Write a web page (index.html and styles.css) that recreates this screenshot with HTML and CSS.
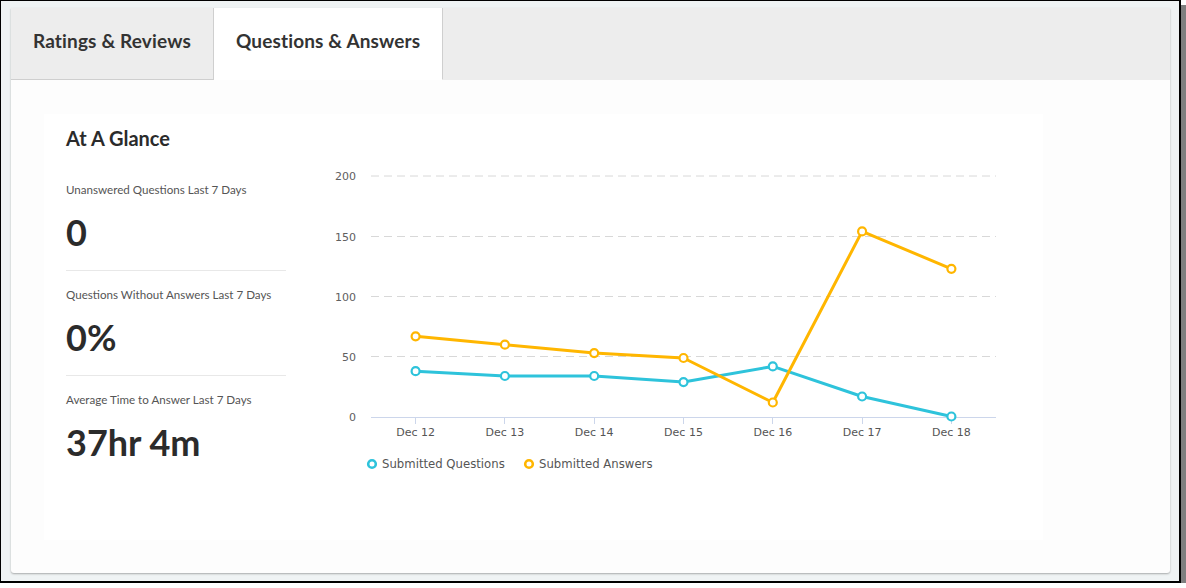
FILE: index.html
```html
<!DOCTYPE html>
<html>
<head>
<meta charset="utf-8">
<link rel="stylesheet" href="styles.css">
</head>
<body>
<div class="frame">
  <div class="panel">
    <div class="tabs">
      <div class="tab">Ratings &amp; Reviews</div>
      <div class="tab active">Questions &amp; Answers</div>
    </div>
    <div class="content">
      <div class="card">
        <div class="stats">
          <h2 class="title">At A Glance</h2>
          <div class="stat first">
            <div class="label">Unanswered Questions Last 7 Days</div>
            <div class="value">0</div>
          </div>
          <div class="stat">
            <div class="label">Questions Without Answers Last 7 Days</div>
            <div class="value">0%</div>
          </div>
          <div class="stat">
            <div class="label">Average Time to Answer Last 7 Days</div>
            <div class="value">37hr 4m</div>
          </div>
        </div>
        <svg class="chart" width="700" height="320" viewBox="0 0 700 320">
          <g class="grid">
            <line x1="51" y1="16" x2="676" y2="16"/>
            <line x1="51" y1="76.5" x2="676" y2="76.5"/>
            <line x1="51" y1="136.5" x2="676" y2="136.5"/>
            <line x1="51" y1="196.5" x2="676" y2="196.5"/>
          </g>
          <g class="axis">
            <line x1="51" y1="257.5" x2="676" y2="257.5"/>
            <line x1="95.5" y1="257" x2="95.5" y2="264"/>
            <line x1="184.5" y1="257" x2="184.5" y2="264"/>
            <line x1="274.5" y1="257" x2="274.5" y2="264"/>
            <line x1="363.5" y1="257" x2="363.5" y2="264"/>
            <line x1="452.5" y1="257" x2="452.5" y2="264"/>
            <line x1="542.5" y1="257" x2="542.5" y2="264"/>
            <line x1="631.5" y1="257" x2="631.5" y2="264"/>
          </g>
          <g class="ylabels">
            <text x="36" y="20">200</text>
            <text x="36" y="81">150</text>
            <text x="36" y="141">100</text>
            <text x="36" y="201">50</text>
            <text x="36" y="261">0</text>
          </g>
          <g class="xlabels">
            <text x="95.6" y="276">Dec 12</text>
            <text x="184.9" y="276">Dec 13</text>
            <text x="274.2" y="276">Dec 14</text>
            <text x="363.5" y="276">Dec 15</text>
            <text x="452.8" y="276">Dec 16</text>
            <text x="542.1" y="276">Dec 17</text>
            <text x="631.4" y="276">Dec 18</text>
          </g>
          <g class="series q">
            <polyline points="95.6,211.2 184.9,216 274.2,216 363.5,222.1 452.8,206.4 542.1,236.5 631.4,256.5"/>
            <circle cx="95.6" cy="211.2" r="4"/>
            <circle cx="184.9" cy="216" r="4"/>
            <circle cx="274.2" cy="216" r="4"/>
            <circle cx="363.5" cy="222.1" r="4"/>
            <circle cx="452.8" cy="206.4" r="4"/>
            <circle cx="542.1" cy="236.5" r="4"/>
            <circle cx="631.4" cy="256.5" r="4"/>
          </g>
          <g class="series a">
            <polyline points="95.6,176.3 184.9,184.7 274.2,193.1 363.5,198 452.8,242.5 542.1,71.4 631.4,108.8"/>
            <circle cx="95.6" cy="176.3" r="4"/>
            <circle cx="184.9" cy="184.7" r="4"/>
            <circle cx="274.2" cy="193.1" r="4"/>
            <circle cx="363.5" cy="198" r="4"/>
            <circle cx="452.8" cy="242.5" r="4"/>
            <circle cx="542.1" cy="71.4" r="4"/>
            <circle cx="631.4" cy="108.8" r="4"/>
          </g>
          <g class="legend">
            <circle class="lq" cx="52" cy="304" r="3.8"/>
            <text x="62" y="308">Submitted Questions</text>
            <circle class="la" cx="209" cy="304" r="3.8"/>
            <text x="219" y="308">Submitted Answers</text>
          </g>
        </svg>
      </div>
    </div>
  </div>
</div>
</body>
</html>
```
FILE: styles.css
```css
html, body {
  margin: 0;
  padding: 0;
  background: #ffffff;
}

.frame {
  box-sizing: border-box;
  width: 1181px;
  height: 583px;
  border: 1px solid #000;
  border-right-width: 2px;
  border-bottom-width: 2px;
  background: #eff3f4;
  box-shadow: 5px 5px 0 #7f7f7f;
  padding: 7px 0 0 10px;
}

.panel {
  width: 1159px;
  height: 565px;
  background: #fdfdfd;
  border-radius: 0 0 3px 3px;
  box-shadow: 0 1px 2px rgba(0, 0, 0, 0.3);
  display: flex;
  flex-direction: column;
}

.tabs {
  display: flex;
  height: 72px;
  background: #ededed;
  flex: none;
}

.tab {
  box-sizing: border-box;
  height: 72px;
  padding: 0 22px;
  line-height: 65px;
  font-family: Lato, "Open Sans", sans-serif;
  font-weight: 700;
  font-size: 19px;
  letter-spacing: 0.15px;
  color: #333;
  border-right: 1px solid #cfcfcf;
  border-bottom: 1px solid #cfcfcf;
  white-space: nowrap;
}

.tab.active {
  background: #ffffff;
  border-bottom-color: #ffffff;
}

.content {
  padding: 34px 0 0 33px;
}

.card {
  width: 999px;
  height: 426px;
  background: #ffffff;
  display: flex;
  box-sizing: border-box;
  padding: 0 0 0 22px;
}

.stats {
  width: 220px;
  flex: none;
  font-family: Lato, "Open Sans", sans-serif;
  color: #333;
  padding-top: 12px;
}

.title {
  margin: 0;
  font-size: 20px;
  line-height: 24px;
  font-weight: 700;
  color: #2b2b2b;
}

.stat {
  border-top: 1px solid #e8e8e8;
  padding-top: 16px;
  padding-bottom: 18px;
}

.stat.first {
  border-top: none;
  margin-top: 32px;
  padding-top: 0;
}

.label {
  font-size: 11.6px;
  line-height: 16px;
  color: #555;
}

.value {
  margin-top: 14px;
  font-size: 36px;
  line-height: 40px;
  font-weight: 700;
  color: #2b2b2b;
}

.chart {
  margin-top: 46px;
  margin-left: 34px;
  flex: none;
  display: block;
}

.grid line {
  stroke: #d8d8d8;
  stroke-width: 1;
  stroke-dasharray: 8 5;
}

.axis line {
  stroke: #ccd6eb;
  stroke-width: 1;
}

.ylabels text {
  font-family: "DejaVu Sans", sans-serif;
  font-size: 11px;
  fill: #606060;
  text-anchor: end;
}

.xlabels text {
  font-family: "DejaVu Sans", sans-serif;
  font-size: 11px;
  fill: #555;
  text-anchor: middle;
}

.series polyline {
  fill: none;
  stroke-width: 3;
  stroke-linejoin: round;
}

.series circle {
  fill: #fff;
  stroke-width: 2.2;
}

.series.q polyline, .series.q circle {
  stroke: #2ec3db;
}

.series.a polyline, .series.a circle {
  stroke: #ffb600;
}

.legend circle {
  fill: #fff;
  stroke-width: 2.6;
}

.legend .lq { stroke: #2ec3db; }
.legend .la { stroke: #ffb600; }

.legend text {
  font-family: "DejaVu Sans", sans-serif;
  font-size: 11.7px;
  fill: #555;
}
```
